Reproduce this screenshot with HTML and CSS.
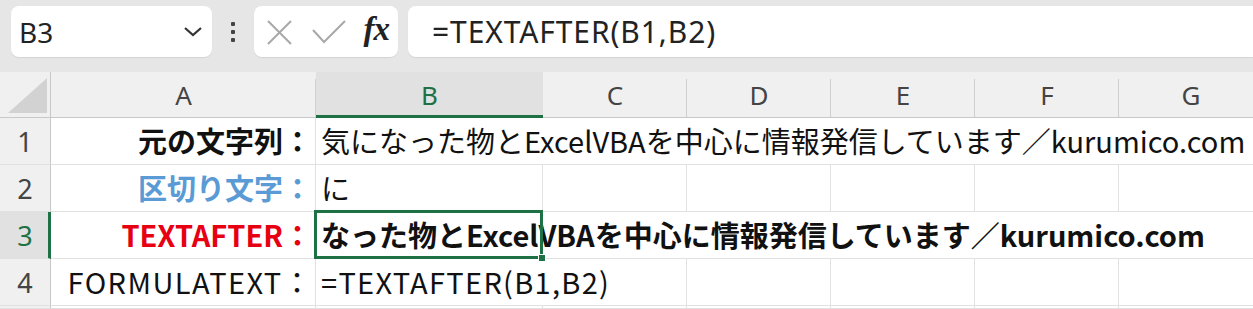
FILE: index.html
```html
<!DOCTYPE html>
<html lang="ja">
<head>
  <meta charset="UTF-8" />
  <title>TEXTAFTER</title>
  <link rel="stylesheet" href="styles.css">
</head>
<body>
  <div class="toolbar">
    <div class="namebox">
      <span>B3</span>
      <svg class="chevron" width="20" height="12" viewBox="0 0 20 12">
        <polyline points="2,2 10,9 18,2" fill="none" stroke="#333" stroke-width="2.2" />
      </svg>
    </div>
    <div class="grip">
      <i></i><i></i><i></i>
    </div>
    <div class="buttons">
      <svg width="28" height="28" viewBox="0 0 28 28">
        <path d="M2 3 L25 26 M25 3 L2 26" stroke="#a8a8a8" stroke-width="2" fill="none" />
      </svg>
      <svg width="34" height="26" viewBox="0 0 34 26">
        <polyline points="1,11 12,23 33,2" stroke="#a8a8a8" stroke-width="2" fill="none" />
      </svg>
      <span class="fx">fx</span>
    </div>
    <div class="formula">=TEXTAFTER(B1,B2)</div>
  </div>

  <div class="sheet">
    <div class="corner"><i></i></div>
    <div class="colhead">A</div>
    <div class="colhead active">B</div>
    <div class="colhead">C</div>
    <div class="colhead">D</div>
    <div class="colhead">E</div>
    <div class="colhead">F</div>
    <div class="colhead last">G</div>

    <div class="rowhead">1</div>
    <div class="cell label">元の文字列：</div>
    <div class="cell text span-all">気になった物とExcelVBAを中心に情報発信しています／kurumico.com</div>

    <div class="rowhead">2</div>
    <div class="cell label blue">区切り文字：</div>
    <div class="cell text">に</div>
    <div class="cell"></div>
    <div class="cell"></div>
    <div class="cell"></div>
    <div class="cell"></div>
    <div class="cell last"></div>

    <div class="rowhead active">3</div>
    <div class="cell label red">TEXTAFTER：</div>
    <div class="cell text bold span-all">
      なった物とExcelVBAを中心に情報発信しています／kurumico.com
      <div class="selection"><i></i></div>
    </div>

    <div class="rowhead">4</div>
    <div class="cell label plain">FORMULATEXT：</div>
    <div class="cell text wide span-2">=TEXTAFTER(B1,B2)</div>
    <div class="cell"></div>
    <div class="cell"></div>
    <div class="cell"></div>
    <div class="cell last"></div>

    <div class="rowhead"></div>
    <div class="cell"></div>
    <div class="cell"></div>
    <div class="cell"></div>
    <div class="cell"></div>
    <div class="cell"></div>
    <div class="cell"></div>
    <div class="cell last"></div>
  </div>
</body>
</html>
```

FILE: styles.css
```css
* { box-sizing: border-box; }
body {
  margin: 0;
  width: 1253px;
  height: 309px;
  overflow: hidden;
  background: #e6e6e6;
  font-family: "Noto Sans", "Noto Sans CJK JP", sans-serif;
  color: #222;
}

/* formula bar */
.toolbar {
  height: 72px;
  display: flex;
  align-items: flex-start;
  padding: 6px 0 0 11px;
}

.namebox, .buttons, .formula {
  height: 51px;
  background: #fff;
  border-radius: 8px;
  box-shadow: 0 1px 1px rgba(0,0,0,0.08);
  display: flex;
  align-items: center;
}

.namebox {
  width: 201px;
  padding: 0 9px 0 8px;
  justify-content: space-between;
  font-size: 28px;
}

.grip {
  width: 42px;
  height: 51px;
  display: flex;
  flex-direction: column;
  align-items: center;
  justify-content: center;
  gap: 4px;
}

.grip i {
  width: 4px;
  height: 4px;
  background: #444;
  border-radius: 1px;
}

.buttons {
  width: 144px;
  padding: 0 9px 0 12px;
  justify-content: space-between;
}

.fx {
  font-family: "Liberation Serif", serif;
  font-style: italic;
  font-weight: bold;
  font-size: 33px;
  color: #222;
  letter-spacing: -1px;
  padding-bottom: 4px;
}

.formula {
  flex: 1;
  margin-left: 10px;
  padding-left: 24px;
  font-size: 30px;
  letter-spacing: 0.9px;
  color: #222;
  border-radius: 8px 0 0 8px;
}

/* grid */
.sheet {
  display: grid;
  grid-template-columns: 51px 265px 227px repeat(5, 144px);
  grid-template-rows: 46px repeat(4, 47px) 3px;
  background: #fff;
}

.corner {
  background: #f0f0f0;
  border-right: 1px solid #c8c8c8;
  border-bottom: 1px solid #c8c8c8;
  padding: 6px 3px 4px 8px;
}

.corner i {
  display: block;
  width: 100%;
  height: 100%;
  background: #d2d2d2;
  clip-path: polygon(100% 0, 100% 100%, 0 100%);
}

.colhead {
  background: #f0f0f0 linear-gradient(#d0d0d0, #d0d0d0) right bottom / 1px 38px no-repeat;
  border-bottom: 1px solid #c8c8c8;
  color: #444;
  font-size: 26px;
  display: flex;
  align-items: center;
  justify-content: center;
}

.colhead.active {
  background: #e1e1e1;
  color: #1e7145;
  border-bottom: 3px solid #1e7145;
  padding-top: 2px;
}

.colhead.last { background-image: none; }

.rowhead {
  background: #f0f0f0;
  border-right: 1px solid #c8c8c8;
  border-bottom: 1px solid #e1e1e1;
  color: #444;
  font-size: 27px;
  display: flex;
  align-items: center;
  justify-content: center;
}

.rowhead.active {
  background: #e1e1e1;
  color: #1e7145;
  border-right: 3px solid #1e7145;
  padding-left: 2px;
}

.cell {
  border-right: 1px solid #e1e1e1;
  border-bottom: 1px solid #e1e1e1;
  font-family: "Noto Sans CJK JP", sans-serif;
  font-size: 29px;
  color: #111;
  white-space: nowrap;
  display: flex;
  align-items: center;
  padding-bottom: 2px;
}

.cell.last { border-right: none; }

.label {
  justify-content: flex-end;
  padding-right: 3px;
  font-weight: bold;
}

.label.blue { color: #5b9bd5; }
.label.red { color: #e60012; }
.label.plain {
  font-weight: normal;
  letter-spacing: 1.4px;
  padding-right: 2px;
}

.text { padding-left: 5px; }
.text.wide { letter-spacing: 1.3px; }
.bold { font-weight: bold; }

.span-all { grid-column: 3 / -1; border-right: none; }
.span-2 { grid-column: 3 / 5; }

.cell.span-all.bold { position: relative; }

/* active cell frame over B3 */
.selection {
  position: absolute;
  left: -2px;
  top: -2px;
  width: 229px;
  height: 49px;
  border: 3px solid #1e7145;
  pointer-events: none;
}

.selection i {
  position: absolute;
  right: -6px;
  bottom: -6px;
  width: 8px;
  height: 8px;
  background: #1e7145;
  border: 1px solid #fff;
}
```
